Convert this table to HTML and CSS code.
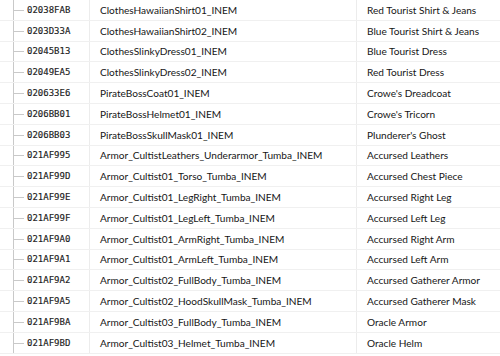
FILE: index.html
```html
<!DOCTYPE html>
<html>
<head>
<meta charset="utf-8">
<link rel="stylesheet" href="styles.css">
</head>
<body>
<div class="list">
  <div class="row"><div class="c id"><span class="branch"></span>02038FAB</div><div class="c name">ClothesHawaiianShirt01_INEM</div><div class="c label">Red Tourist Shirt &amp; Jeans</div></div>
  <div class="row"><div class="c id"><span class="branch"></span>0203D33A</div><div class="c name">ClothesHawaiianShirt02_INEM</div><div class="c label">Blue Tourist Shirt &amp; Jeans</div></div>
  <div class="row"><div class="c id"><span class="branch"></span>02045B13</div><div class="c name">ClothesSlinkyDress01_INEM</div><div class="c label">Blue Tourist Dress</div></div>
  <div class="row"><div class="c id"><span class="branch"></span>02049EA5</div><div class="c name">ClothesSlinkyDress02_INEM</div><div class="c label">Red Tourist Dress</div></div>
  <div class="row"><div class="c id"><span class="branch"></span>020633E6</div><div class="c name">PirateBossCoat01_INEM</div><div class="c label">Crowe's Dreadcoat</div></div>
  <div class="row"><div class="c id"><span class="branch"></span>0206BB01</div><div class="c name">PirateBossHelmet01_INEM</div><div class="c label">Crowe's Tricorn</div></div>
  <div class="row"><div class="c id"><span class="branch"></span>0206BB03</div><div class="c name">PirateBossSkullMask01_INEM</div><div class="c label">Plunderer's Ghost</div></div>
  <div class="row"><div class="c id"><span class="branch"></span>021AF995</div><div class="c name">Armor_CultistLeathers_Underarmor_Tumba_INEM</div><div class="c label">Accursed Leathers</div></div>
  <div class="row"><div class="c id"><span class="branch"></span>021AF99D</div><div class="c name">Armor_Cultist01_Torso_Tumba_INEM</div><div class="c label">Accursed Chest Piece</div></div>
  <div class="row"><div class="c id"><span class="branch"></span>021AF99E</div><div class="c name">Armor_Cultist01_LegRight_Tumba_INEM</div><div class="c label">Accursed Right Leg</div></div>
  <div class="row"><div class="c id"><span class="branch"></span>021AF99F</div><div class="c name">Armor_Cultist01_LegLeft_Tumba_INEM</div><div class="c label">Accursed Left Leg</div></div>
  <div class="row"><div class="c id"><span class="branch"></span>021AF9A0</div><div class="c name">Armor_Cultist01_ArmRight_Tumba_INEM</div><div class="c label">Accursed Right Arm</div></div>
  <div class="row"><div class="c id"><span class="branch"></span>021AF9A1</div><div class="c name">Armor_Cultist01_ArmLeft_Tumba_INEM</div><div class="c label">Accursed Left Arm</div></div>
  <div class="row"><div class="c id"><span class="branch"></span>021AF9A2</div><div class="c name">Armor_Cultist02_FullBody_Tumba_INEM</div><div class="c label">Accursed Gatherer Armor</div></div>
  <div class="row"><div class="c id"><span class="branch"></span>021AF9A5</div><div class="c name">Armor_Cultist02_HoodSkullMask_Tumba_INEM</div><div class="c label">Accursed Gatherer Mask</div></div>
  <div class="row"><div class="c id"><span class="branch"></span>021AF9BA</div><div class="c name">Armor_Cultist03_FullBody_Tumba_INEM</div><div class="c label">Oracle Armor</div></div>
  <div class="row"><div class="c id"><span class="branch"></span>021AF9BD</div><div class="c name">Armor_Cultist03_Helmet_Tumba_INEM</div><div class="c label">Oracle Helm</div></div>
</div>
</body>
</html>
```
FILE: styles.css
```css
html, body {
  margin: 0;
  padding: 0;
  background: #ffffff;
  overflow: hidden;
}
.list {
  width: 500px;
  display: flex;
  flex-direction: column;
}
.row {
  display: grid;
  grid-template-columns: 90px 267px 1fr;
  height: 20.8px;
  box-sizing: border-box;
  border-bottom: 1px solid #f0f0f0;
}
.c {
  display: flex;
  align-items: center;
  white-space: nowrap;
  overflow: hidden;
}
.id {
  font-family: "DejaVu Sans Mono", monospace;
  font-size: 9px;
  color: #1c1c1c;
  -webkit-text-stroke: 0.15px #1c1c1c;
  padding-left: 13px;
  border-right: 1px solid #ececec;
  align-self: stretch;
}
.branch {
  align-self: stretch;
  width: 10px;
  margin-bottom: -1px;
  margin-right: 3px;
  border-left: 1px solid #c9c9c9;
  display: flex;
  align-items: center;
}
.branch::after {
  content: "";
  width: 100%;
  border-top: 1px solid #c9c9c9;
}
.name, .label {
  font-family: Lato, sans-serif;
  font-size: 10.1px;
  color: #161616;
  padding-left: 10px;
}
.name {
  border-right: 1px solid #ececec;
}
```
